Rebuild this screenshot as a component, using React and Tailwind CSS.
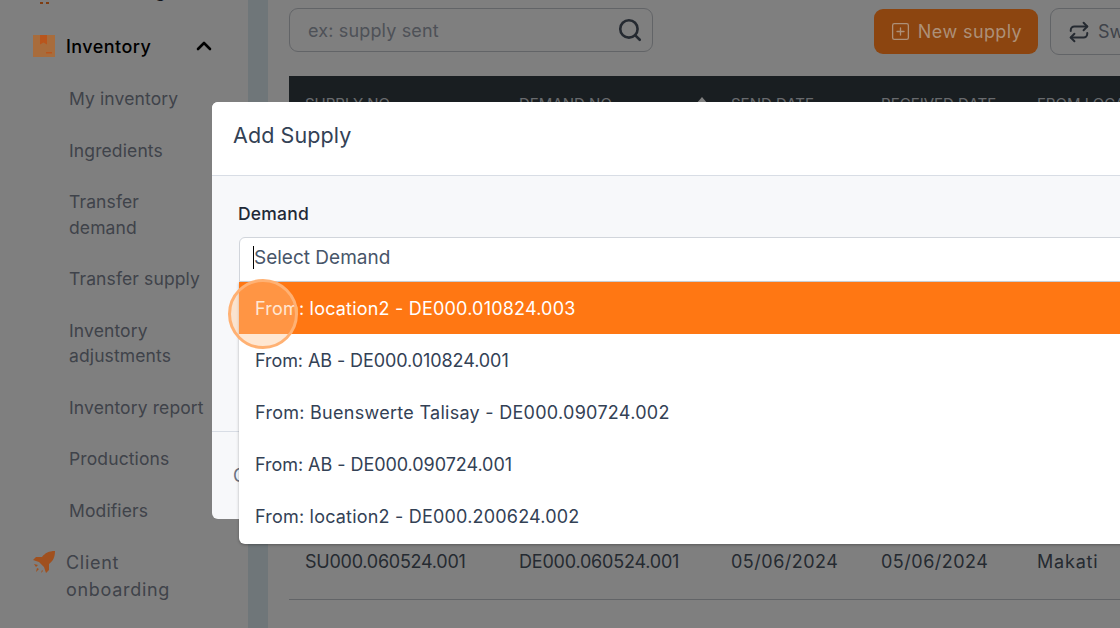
import React from "react";
import { ChevronUp, Repeat, Search, SquarePlus } from "lucide-react";

const font = "font-['Inter','Noto_Sans',sans-serif]";

const subItems = [
    ["My inventory"],
    ["Ingredients"],
    ["Transfer", "demand"],
    ["Transfer supply"],
    ["Inventory", "adjustments"],
    ["Inventory report"],
    ["Productions"],
    ["Modifiers"],
];

const demands = [
    { label: "From: location2 - DE000.010824.003", track: "tracking-[0.2px]" },
    { label: "From: AB - DE000.010824.001", track: "tracking-[-0.08px]" },
    { label: "From: Buenswerte Talisay - DE000.090724.002", track: "tracking-[0.28px]" },
    { label: "From: AB - DE000.090724.001", track: "tracking-[-0.05px]" },
    { label: "From: location2 - DE000.200624.002", track: "tracking-[0.2px]" },
];

function BoxIcon() {
    return (
        <svg width="22" height="22" viewBox="0 0 22 22" className="shrink-0 relative z-10">
            <rect width="22" height="22" fill="#a86c3c" />
            <path d="M7 0h7v9.500l-3.500-2-3.500 2z" fill="#b9551c" />
            <rect x="13" y="17" width="6" height="1.500" fill="#b9551c" />
        </svg>
    );
}

function RocketIcon() {
    return (
        <svg width="24" height="24" viewBox="0 0 24 24" className="shrink-0 relative z-10">
            <path d="M23 1C17 1 13 3 10 7H4L1 10l6 2 5 5 2 6 3-3v-6c4-3 6-7 6-13z" fill="#a0501e" />
            <path d="M2 14l4 1-2 2zM5 18l2 1-3 3zM10 20l1 1-2 2z" fill="#a0501e" />
        </svg>
    );
}

function Sidebar() {
    return (
        <div className="w-[248px] shrink-0 bg-white flex flex-col pl-[33px]">
            <div className="h-[26px] -mt-[22px] flex items-end">
                <div className="w-[22px] flex justify-center gap-[3px]">
                    <div className="w-[3px] h-[2px] bg-[#ff7a22]" />
                    <div className="w-[3px] h-[2px] bg-[#ff7a22]" />
                </div>
                <span className="ml-[11px] text-[18px] leading-[26px] tracking-[0.5px] text-[#1f2937]">Purchasing</span>
            </div>
            <div className="h-[26px] flex items-center mt-[29px] mb-[13px]">
                <BoxIcon />
                <span className="ml-[11px] text-[18px] font-medium tracking-[0.45px] text-black">Inventory</span>
                <ChevronUp size={24} strokeWidth={2.6} className="ml-[41px] text-black" />
            </div>
            <div className="flex flex-col pl-[36px] pt-[14px] gap-[26px] text-[17.500px] leading-[25.500px] tracking-[0.12px] text-[#7f8694]">
                {subItems.map((item) => (
                    <div key={item.join(" ")}>
                        {item.map((line) => (
                            <div key={line}>{line}</div>
                        ))}
                    </div>
                ))}
            </div>
            <div className="flex mt-[26px] text-[18px] leading-[27px] text-[#7f8694]">
                <div className="-ml-[1px] pt-[1px]"><RocketIcon /></div>
                <div className="ml-[10px] tracking-[0.7px]">Client<br />onboarding</div>
            </div>
        </div>
    );
}

function Main() {
    return (
        <div className="flex-1 min-w-0 bg-white pl-[21px] overflow-hidden">
            <div className="flex items-start pt-[8px] w-[900px]">
                <div className="w-[364px] h-[44px] border border-[#c4c8ce] rounded-[9px] flex items-center justify-between pl-[18px] pr-[9px]">
                    <span className="text-[18px] tracking-[0.15px] text-[#9ca3af]">ex: supply sent</span>
                    <Search size={26} strokeWidth={2.4} className="text-[#4b5563]" />
                </div>
                <button className="relative z-10 ml-[221px] mt-[1px] w-[164px] h-[45px] rounded-[9px] bg-[#8c4510] text-[#ad9078] text-[18px] tracking-[0.4px] flex items-center justify-center gap-[7px]">
                    <SquarePlus size={21} strokeWidth={1.5} />
                    New supply
                </button>
                <button className="ml-[12px] w-[120px] h-[47px] rounded-[9px] border border-[#c4c8ce] text-[#7f8694] text-[18px] flex items-center pl-[17px] gap-[8px]">
                    <Repeat size={22} strokeWidth={2.2} className="text-[#4b5563]" />
                    Swap
                </button>
            </div>
            <div className="mt-[21px] w-[900px]">
                <div className="h-[52px] bg-[#323c42] text-[#d1d5db] text-[15px]">
                    <div className="flex pt-[17px]">
                        <span className="w-[214px] pl-[16px]">SUPPLY NO.</span>
                        <span className="w-[212px] pl-[16px] pr-[7px] flex justify-between items-start">
                            DEMAND NO.
                            <span className="mt-[4px] w-0 h-0 border-x-[6px] border-x-transparent border-b-[7px] border-b-white" />
                        </span>
                        <span className="w-[150px] pl-[16px]">SEND DATE</span>
                        <span className="w-[156px] pl-[16px]">RECEIVED DATE</span>
                        <span className="pl-[16px]">FROM LOCATION</span>
                    </div>
                </div>
                <div className="h-[472px] border-b border-[#c4c8ce] flex items-end pb-[24px] text-[18px] text-[#4b5563]">
                    <span className="w-[214px] pl-[16px] tracking-[-0.25px]">SU000.060524.001</span>
                    <span className="w-[212px] pl-[16px] tracking-[-0.2px]">DE000.060524.001</span>
                    <span className="w-[150px] pl-[16px] tracking-[0.5px]">05/06/2024</span>
                    <span className="w-[156px] pl-[16px] tracking-[0.5px]">05/06/2024</span>
                    <span className="pl-[16px] tracking-[0.8px]">Makati</span>
                </div>
            </div>
        </div>
    );
}

function AddSupplyModal() {
    return (
        <div className="absolute z-20 left-[212px] top-[102px] w-[1000px] h-[417px] rounded-[6px] bg-[#f7f8fa] overflow-hidden flex flex-col">
            <div className="h-[74px] shrink-0 bg-white border-b border-[#d8dde5] flex items-center pl-[21px] pb-[6px] text-[21.500px] tracking-[0.1px] text-[#334155]">
                Add Supply
            </div>
            <div className="flex-1 pl-[26px] pt-[26px]">
                <div className="text-[17.500px] font-medium tracking-[0.2px] text-[#1f2937] leading-[24px]">Demand</div>
            </div>
            <div className="h-[88px] shrink-0 border-t border-[#d8dde5] flex items-center pl-[21px] text-[18px] text-[#6b7280]">
                Cancel
            </div>
        </div>
    );
}

function DemandSelect() {
    return (
        <div className="absolute z-20 left-[239px] top-[237px] w-[1000px]">
            <div className="h-[45px] bg-white border border-[#d1d5db] rounded-t-[6px] flex items-center pl-[13px] pb-[4px] text-[19px] text-[#475569]">
                <span className="border-l border-black leading-[23px]">Select Demand</span>
            </div>
            <div className="bg-white rounded-b-[6px] pb-[2px] shadow-[0_1px_3px_rgba(0,0,0,0.3)]">
                {demands.map((item, i) => (
                    <div
                        key={item.label}
                        className={`h-[52px] flex items-center pl-[16px] text-[18px] ${item.track} ${i === 0 ? "bg-[#ff7713] text-white" : "text-[#334155]"}`}
                    >
                        {item.label}
                    </div>
                ))}
            </div>
        </div>
    );
}

export default function App() {
    return (
        <div className={`relative w-[1120px] h-[628px] overflow-hidden flex bg-[#deecf2] ${font}`}>
            <Sidebar />
            <div className="w-[20px] shrink-0" />
            <Main />
            <div className="absolute inset-0 bg-black/50" />
            <AddSupplyModal />
            <DemandSelect />
            <div className="absolute z-30 left-[228px] top-[279px] w-[70px] h-[70px] rounded-full bg-[#ffc48f]/40 border-[3px] border-[#ffb173]" />
        </div>
    );
}
